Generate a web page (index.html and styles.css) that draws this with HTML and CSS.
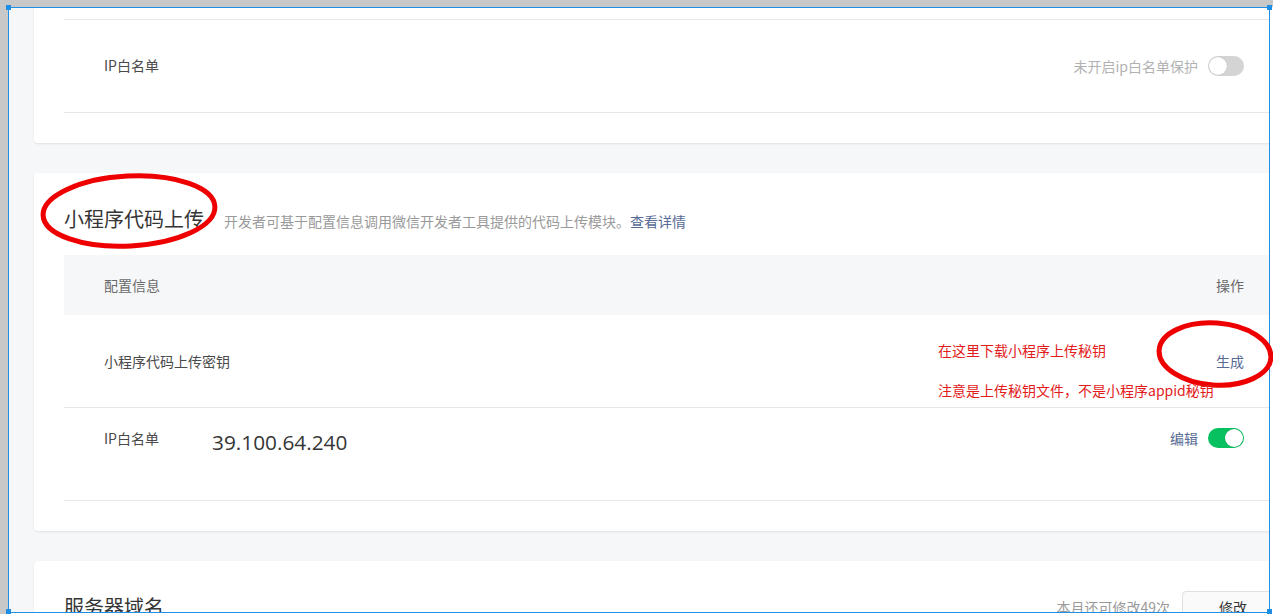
FILE: index.html
```html
<!DOCTYPE html>
<html lang="zh-CN">
<head>
<meta charset="utf-8">
<title>开发设置</title>
<link rel="stylesheet" href="styles.css">
</head>
<body>
<div class="screen">
  <div class="frame">
    <div class="content">
      <section class="card card-cut">
        <div class="row-cut"></div>
        <div class="row">
          <div class="label">IP白名单</div>
          <div class="ops">
            <span class="muted">未开启ip白名单保护</span>
            <span class="switch"><span class="knob"></span></span>
          </div>
        </div>
      </section>

      <section class="card">
        <div class="card-head">
          <h2 class="title">小程序代码上传</h2>
          <p class="desc">开发者可基于配置信息调用微信开发者工具提供的代码上传模块。<a class="link" href="#">查看详情</a></p>
        </div>
        <div class="thead">
          <span>配置信息</span>
          <span>操作</span>
        </div>
        <div class="row">
          <div class="label">小程序代码上传密钥</div>
          <div class="ops"><a class="link" href="#">生成</a></div>
        </div>
        <div class="row row-top">
          <div class="label label-fixed">IP白名单</div>
          <div class="ip">39.100.64.240</div>
          <div class="ops">
            <a class="link" href="#">编辑</a>
            <span class="switch on"><span class="knob"></span></span>
          </div>
        </div>
      </section>

      <section class="card">
        <div class="card-head split">
          <h2 class="title">服务器域名</h2>
          <div class="head-ops">
            <span class="muted2">本月还可修改49次</span>
            <button class="btn" type="button">修改</button>
          </div>
        </div>
      </section>
    </div>
  </div>

  <div class="overlay">
    <span class="handle h-tl"></span>
    <span class="handle h-tr"></span>
    <span class="handle h-bl"></span>
    <span class="handle h-br"></span>
    <svg class="marks" width="1273" height="614" viewBox="0 0 1273 614">
      <ellipse cx="129" cy="211" rx="86" ry="35" transform="rotate(-3 129 211)" fill="none" stroke="#ee0000" stroke-width="5"/>
      <ellipse cx="1215" cy="354" rx="56" ry="31" transform="rotate(4 1215 354)" fill="none" stroke="#ee0000" stroke-width="5"/>
    </svg>
    <div class="note note-1">在这里下载小程序上传秘钥</div>
    <div class="note note-2">注意是上传秘钥文件，不是小程序appid秘钥</div>
  </div>
</div>
</body>
</html>
```

FILE: styles.css
```css
html, body {
  margin: 0;
  padding: 0;
  background: #ffffff;
}

body {
  font-family: "Noto Sans CJK SC", "Liberation Sans", sans-serif;
  color: #353535;
}

.screen {
  position: relative;
  width: 1273px;
  height: 614px;
  overflow: hidden;
  box-sizing: border-box;
  padding: 7px 0 0 8px;
  background:
    linear-gradient(#c8c8c8, #c8c8c8) left top / 100% 7px no-repeat,
    linear-gradient(#c8c8c8, #c8c8c8) left top / 8px 100% no-repeat,
    #ffffff;
}

.frame {
  width: 1262px;
  height: 606px;
  box-sizing: border-box;
  border: 1px solid #1f8fe5;
  background: #f6f7f8;
  overflow: hidden;
}

.content {
  padding-left: 25px;
}

.card {
  width: 1280px;
  box-sizing: border-box;
  background: #ffffff;
  border-radius: 4px;
  box-shadow: 0 1px 2px rgba(0, 0, 0, 0.09);
  padding: 0 30px 30px;
  margin-bottom: 30px;
}

.card-cut {
  border-top-left-radius: 0;
  border-top-right-radius: 0;
}

.row-cut {
  height: 12px;
  box-sizing: border-box;
  border-bottom: 1px solid #e7e7e7;
}

.row {
  display: flex;
  align-items: center;
  height: 93px;
  box-sizing: border-box;
  padding: 0 40px;
  border-bottom: 1px solid #e7e7e7;
}

.row-top {
  align-items: flex-start;
  padding-top: 20px;
}

.label {
  font-size: 14px;
  line-height: 20px;
  color: #4a4a4a;
}

.card-cut .label {
  margin-top: -2px;
}

.label-fixed {
  width: 108px;
  flex: none;
}

.ip {
  font-family: "Open Sans", "Noto Sans", sans-serif;
  font-size: 20.8px;
  line-height: 28px;
  color: #353535;
}

.ops {
  margin-left: auto;
  display: flex;
  align-items: center;
  gap: 10px;
  font-size: 14px;
  line-height: 20px;
}

.muted {
  color: #b2b2b2;
}

.link {
  color: #576b95;
  text-decoration: none;
}

.switch {
  position: relative;
  display: inline-block;
  width: 36px;
  height: 20px;
  border-radius: 10px;
  background: #d4d4d4;
  flex: none;
}

.switch .knob {
  position: absolute;
  top: 1px;
  left: 1px;
  width: 18px;
  height: 18px;
  border-radius: 50%;
  background: #ffffff;
  box-shadow: 0 0 1px rgba(0, 0, 0, 0.25);
}

.switch.on {
  background: #07c160;
}

.switch.on .knob {
  left: 17px;
}

.card-head {
  display: flex;
  align-items: baseline;
  padding-top: 30px;
  margin-bottom: 20px;
}

.title {
  margin: 0;
  font-size: 20px;
  line-height: 32px;
  font-weight: normal;
  color: #353535;
}

.desc {
  margin: 0 0 0 20px;
  font-size: 14px;
  line-height: 20px;
  color: #9a9a9a;
}

.thead {
  display: flex;
  justify-content: space-between;
  align-items: center;
  height: 60px;
  padding: 0 40px;
  background: #f6f7f9;
  font-size: 14px;
  line-height: 20px;
  color: #6a6a6a;
}

.split {
  align-items: center;
  justify-content: space-between;
}

.head-ops {
  display: flex;
  align-items: center;
  gap: 12px;
}

.muted2 {
  font-size: 14px;
  color: #9a9a9a;
}

.btn {
  width: 102px;
  height: 32px;
  border: 1px solid #e0e0e0;
  border-radius: 4px;
  background: #fafafa;
  font-family: "Noto Sans CJK SC", sans-serif;
  font-size: 14px;
  color: #353535;
}

.overlay {
  position: absolute;
  left: 0;
  top: 0;
  width: 1273px;
  height: 614px;
  pointer-events: none;
}

.marks {
  position: absolute;
  left: 0;
  top: 0;
}

.handle {
  position: absolute;
  width: 5px;
  height: 5px;
  background: #1f8fe5;
}

.h-tl { left: 6px; top: 5px; }
.h-tr { left: 1267px; top: 5px; }
.h-bl { left: 6px; top: 609px; }
.h-br { left: 1267px; top: 609px; }

.note {
  position: absolute;
  left: 938px;
  font-size: 14px;
  line-height: 20px;
  color: #e21b1b;
  white-space: nowrap;
}

.note-1 { top: 340px; }
.note-2 { top: 380px; }
```
